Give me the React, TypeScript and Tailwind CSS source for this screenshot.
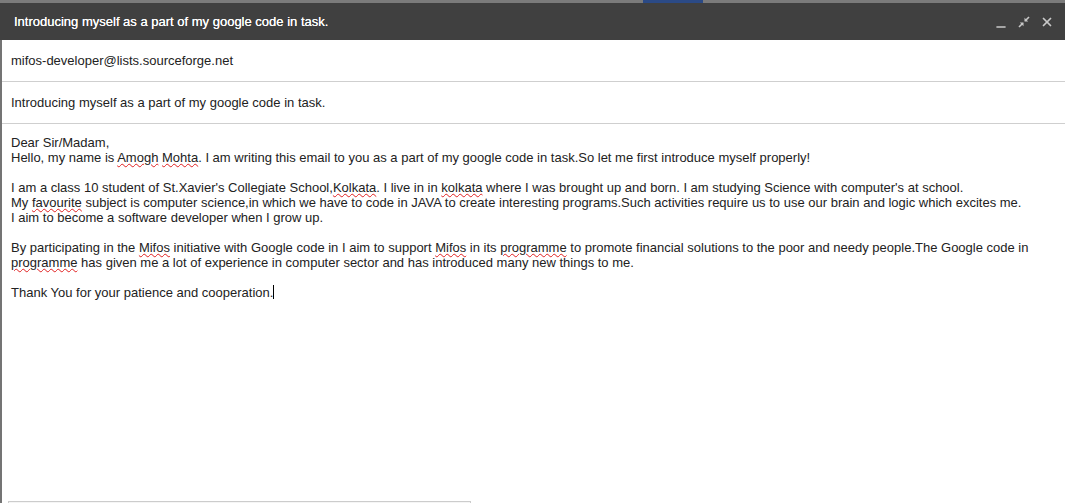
import { Minus, X } from "lucide-react"

const Miss = ({ children }: { children: React.ReactNode }) => (
  <span className="underline decoration-wavy decoration-[#e02020] decoration-1 underline-offset-[1px]">{children}</span>
)

function CollapseIcon() {
  return (
    <svg width="12" height="12" viewBox="0 0 12 12" className="text-[#c8c8c8]">
      <path d="M11 1 L7.2 4.8" stroke="currentColor" strokeWidth="1.6" />
      <path d="M6.5 1.8 V5.5 H10.2 Z" fill="currentColor" />
      <path d="M1 11 L4.8 7.2" stroke="currentColor" strokeWidth="1.6" />
      <path d="M5.5 10.2 V6.5 H1.8 Z" fill="currentColor" />
    </svg>
  )
}

export default function App() {
  return (
    <div className="w-[1065px] h-[503px] overflow-hidden bg-white flex flex-col text-[13px] text-[#222]" style={{ fontFamily: '"Liberation Sans", Arial, sans-serif' }}>
      <div className="h-[3px] bg-[#7b7b7b] flex shrink-0">
        <div className="ml-[643px] w-[60px] bg-[#2b4a86]" />
      </div>
      <div className="h-[37px] bg-[#404040] flex items-center justify-between pl-[14px] pr-[11px] shrink-0">
        <span className="text-white text-[13px] [text-shadow:0_0_0.4px_#fff]">Introducing myself as a part of my google code in task.</span>
        <div className="flex items-center gap-[10px] text-[#c8c8c8]">
          <Minus className="w-[14px] h-[14px] mt-[10px]" strokeWidth={2.5} />
          <CollapseIcon />
          <X className="w-[14px] h-[14px]" strokeWidth={3} />
        </div>
      </div>
      <div className="flex-1 flex border-l-2 border-[#747474]">
        <div className="flex-1 flex flex-col">
          <div className="h-[42px] flex items-center pl-[9px] border-b border-[#cfcfcf] shrink-0">
            mifos-developer@lists.sourceforge.net
          </div>
          <div className="h-[42px] flex items-center pl-[9px] border-b border-[#cfcfcf] shrink-0">
            Introducing myself as a part of my google code in task.
          </div>
          <div className="flex-1 pl-[9px] pt-[11px] leading-[15px]">
            <div>Dear Sir/Madam,</div>
            <div>Hello, my name is <Miss>Amogh</Miss> <Miss>Mohta</Miss>. I am writing this email to you as a part of my google code in task.So let me first introduce myself properly!</div>
            <div className="h-[15px]" />
            <div>I am a class 10 student of St.Xavier's Collegiate School,<Miss>Kolkata</Miss>. I live in in <Miss>kolkata</Miss> where I was brought up and born. I am studying Science with computer's at school.</div>
            <div>My <Miss>favourite</Miss> subject is computer science,in which we have to code in JAVA to create interesting programs.Such activities require us to use our brain and logic which excites me.</div>
            <div>I aim to become a software developer when I grow up.</div>
            <div className="h-[15px]" />
            <div>By participating in the <Miss>Mifos</Miss> initiative with Google code in I aim to support <Miss>Mifos</Miss> in its <Miss>programme</Miss> to promote financial solutions to the poor and needy people.The Google code in</div>
            <div><Miss>programme</Miss> has given me a lot of experience in computer sector and has introduced many new things to me.</div>
            <div className="h-[15px]" />
            <div>Thank You for your patience and cooperation.<span className="inline-block w-px h-[14px] bg-black align-[-2px]" /></div>
          </div>
          <div className="h-[2px] flex shrink-0">
            <div className="ml-[6px] w-[463px] border-t border-l border-r border-[#cccccc] bg-[#f5f5f5]" />
          </div>
        </div>
      </div>
    </div>
  )
}
